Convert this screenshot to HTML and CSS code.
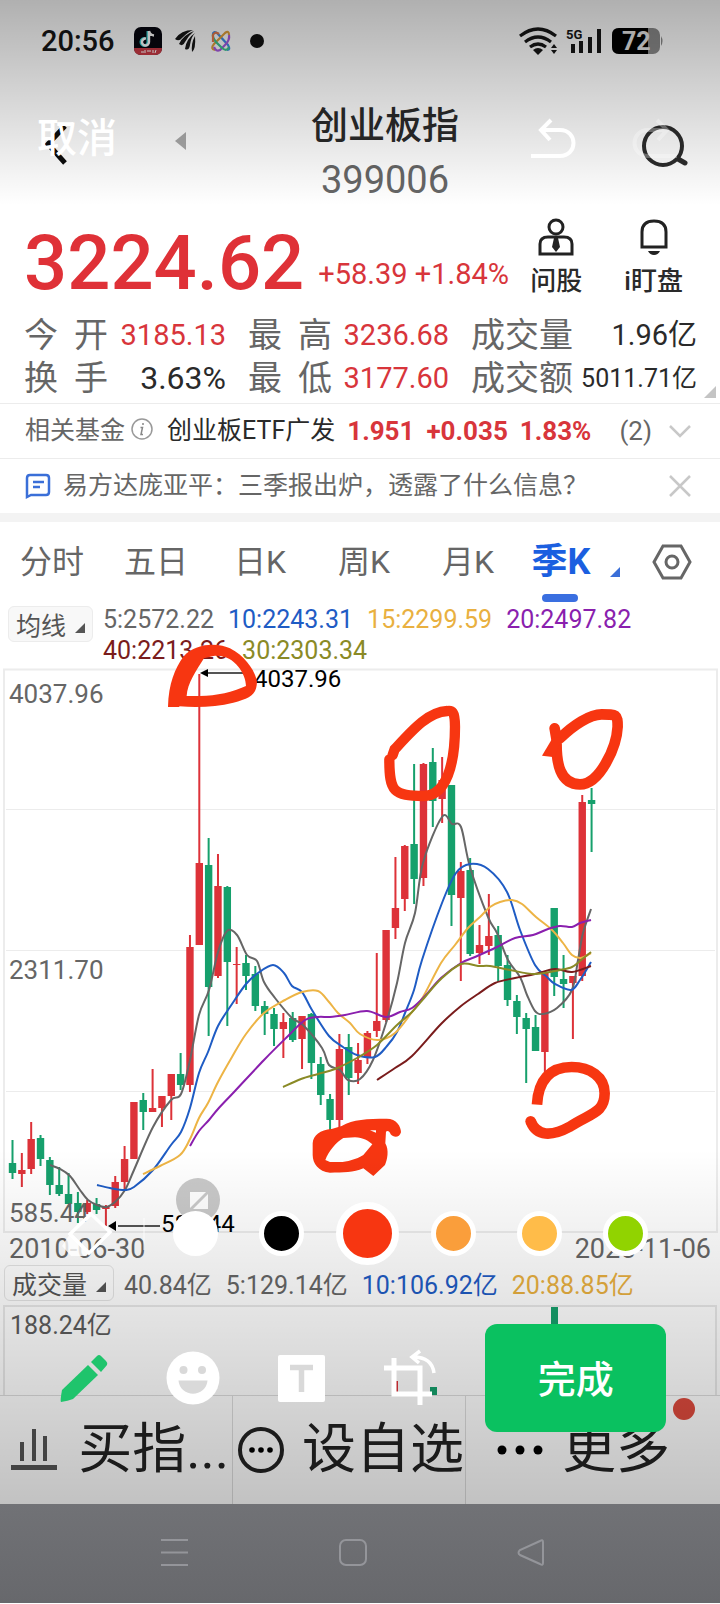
FILE: index.html
```html
<!DOCTYPE html>
<html lang="zh-CN">
<head>
<meta charset="utf-8">
<meta name="viewport" content="width=device-width">
<title>创业板指 399006</title>
<link rel="stylesheet" href="styles.css">
</head>
<body>
<div class="screen">
  <div class="status">
    <span class="clock">20:56</span>
    <svg class="app-icon" width="28" height="28" viewBox="0 0 28 28"><rect width="28" height="28" rx="7" fill="#06060f"/><path d="M0 21H28Q28 28 21 28H7Q0 28 0 21Z" fill="#c93a45"/><path d="M7 25h3M11 23v3M13 24h4M19 23v3M22 23l-1 3" stroke="#fff" stroke-width="1"/><path d="M14 4v11a3.500 3.500 0 1 1-3-3.500" fill="none" stroke="#35d6d6" stroke-width="3"/><path d="M15 4v11a3.500 3.500 0 1 1-3-3.500M15 4q1 4 5 4.500" fill="none" stroke="#fff" stroke-width="2.400"/></svg>
    <svg class="wing-icon" width="22" height="24" viewBox="0 0 22 24" fill="#161616"><path d="M19 1Q7 1 1 10Q5 13 8 9Q14 3 19 1Z"/><path d="M20 2Q9 6 5 15Q9 18 11 13Q15 6 20 2Z"/><path d="M21 4Q12 10 11 20Q15 22 16 16Q17 8 21 4Z"/><path d="M21 7Q17 14 18 23Q22 20 21 7Z"/></svg>
    <svg class="flower-icon" width="28" height="28" viewBox="0 0 28 28" fill="none" stroke-width="2.200"><rect width="28" height="28" rx="7" fill="#fff" opacity=".25"/><path d="M6 7Q6 4 10 6L21 18Q24 23 20 23" stroke="#3f8ee8"/><path d="M8 23Q3 22 7 17L18 6Q22 3 22 8" stroke="#e0a13c"/><path d="M22 8Q23 13 18 18L13 23Q9 25 7 20" stroke="#a65ae0"/><path d="M6 7Q5 10 9 15L15 21Q20 25 22 20" stroke="#3cc38f"/><path d="M6 15V8Q8 4 12 7" stroke="#e57a4a"/></svg>
    <span class="dot"></span>
    <svg class="signal" width="150" height="28" viewBox="0 0 150 28"><g fill="none" stroke="#161616" stroke-width="3.200"><path d="M2 9Q20-5 38 9"/><path d="M7 15Q20 5 33 15"/><path d="M12 20Q20 14 28 20"/></g><path d="M15 23Q20 19 25 23L20 28Z" fill="#161616"/><path d="M33 21l3-4 3 4zM33 23h6l-3 4z" fill="#161616"/><text x="48" y="12" class="net-label">5G</text><path d="M53 17h4v9h-4zM61 14h4v12h-4zM70 10h4v16h-4zM79 2h4v24h-4z" fill="#161616"/><rect x="94" y="1" width="48" height="26" rx="7" fill="#8a8a8a"/><path d="M101 1H130V27H101Q94 27 94 20V8Q94 1 101 1Z" fill="#000"/><path d="M143 9q3 5 0 10z" fill="#8a8a8a"/><text x="104" y="23" class="battery-label">72</text></svg>
  </div>

  <header class="header">
    <div class="header-left">
      <a href="#" aria-label="返回"><svg width="24" height="44" viewBox="0 0 24 44"><path d="M21 4L4 22L21 41" fill="none" stroke="#0c0c0c" stroke-width="5"/></svg></a>
      <a href="#" aria-label="上一个"><svg width="12" height="18" viewBox="0 0 12 18"><path d="M0 9L11 0V18Z" fill="#a9a9a9"/></svg></a>
    </div>
    <h1 class="title">创业板指<span class="code">399006</span></h1>
    <div class="header-right">
      <a href="#" aria-label="搜索"><svg width="48" height="44" viewBox="0 0 48 44" fill="none" stroke="#2c2c2c"><circle cx="22" cy="21" r="19" stroke-width="4"/><path d="M37 34L44 38" stroke-width="5" stroke-linecap="round"/></svg></a>
    </div>
  </header>

  <section class="quote">
    <span class="price">3224.62</span>
    <span class="change">+58.39 +1.84%</span>
    <a class="quick" href="#"><svg width="36" height="38" viewBox="0 0 36 38" fill="none" stroke="#222" stroke-width="3"><circle cx="18" cy="9" r="7"/><path d="M2 36V26Q2 19 10 19H26Q34 19 34 26V36Z"/><path d="M16 20h4l2 9-4 5-4-5z" fill="#222" stroke="none"/></svg>问股</a>
    <a class="quick" href="#"><svg width="30" height="38" viewBox="0 0 30 38" fill="none" stroke="#222" stroke-width="3"><path d="M3 29V14Q3 3 15 3T27 14V29Z"/><path d="M9 33H21Q19 37 15 37T9 33Z" fill="#222" stroke="none"/></svg>i盯盘</a>
  </section>

  <dl class="stats">
    <div><dt>今开</dt><dd class="up">3185.13</dd></div>
    <div><dt>最高</dt><dd class="up">3236.68</dd></div>
    <div><dt class="wide">成交量</dt><dd>1.96亿</dd></div>
    <div><dt>换手</dt><dd class="big">3.63%</dd></div>
    <div><dt>最低</dt><dd class="up">3177.60</dd></div>
    <div><dt class="wide">成交额</dt><dd class="small">5011.71亿</dd></div>
    <svg class="stats-more" width="12" height="12" viewBox="0 0 12 12"><path d="M12 0V12H0Z" fill="#c4c4c4"/></svg>
  </dl>

  <div class="strip fund">
    <span class="muted">相关基金</span>
    <svg class="info" width="22" height="22" viewBox="0 0 22 22"><circle cx="11" cy="11" r="10" fill="none" stroke="#999" stroke-width="1.500"/><path d="M12 5v2M9.500 9.500h2l-1.500 7h2" fill="none" stroke="#888" stroke-width="1.500"/></svg>
    <a class="fund-name" href="#">创业板ETF广发</a>
    <b class="up">1.951</b><b class="up">+0.035</b><b class="up">1.83%</b>
    <span class="count">(2)</span>
    <svg width="24" height="14" viewBox="0 0 24 14"><path d="M2 2L12 12L22 2" fill="none" stroke="#c8c8c8" stroke-width="2.500"/></svg>
  </div>
  <div class="strip news">
    <svg width="26" height="26" viewBox="0 0 26 26" fill="none" stroke="#3a6fd8" stroke-width="2.500"><path d="M2 24V5Q2 2 5 2H21Q24 2 24 5V19Q24 22 21 22H6Z"/><path d="M8 9H19M8 14H15"/></svg>
    <a class="muted news-link" href="#">易方达庞亚平：三季报出炉，透露了什么信息？</a>
    <button class="plain" aria-label="关闭"><svg width="24" height="24" viewBox="0 0 24 24"><path d="M2 2L22 22M22 2L2 22" stroke="#c8c8c8" stroke-width="2.500"/></svg></button>
  </div>

  <nav class="tabs">
    <button>分时</button><button>五日</button><button>日K</button><button>周K</button><button>月K</button>
    <button class="active">季K<svg class="tab-more" width="10" height="10" viewBox="0 0 10 10"><path d="M10 0V10H0Z" fill="#3a6fd8"/></svg></button>
    <button class="settings" aria-label="设置"><svg width="40" height="36" viewBox="0 0 40 36" fill="none" stroke="#666" stroke-width="3"><path d="M11 2H29L38 18L29 34H11L2 18Z"/><circle cx="20" cy="18" r="6"/></svg></button>
  </nav>

  <div class="legend">
    <button class="picker">均线<svg width="10" height="10" viewBox="0 0 10 10"><path d="M10 0V10H0Z" fill="#555"/></svg></button>
    <div class="values">
      <span class="c5">5:2572.22</span><span class="c10">10:2243.31</span><span class="c15">15:2299.59</span><span class="c20">20:2497.82</span><span class="c40">40:2213.26</span><span class="c30">30:2303.34</span>
    </div>
  </div>

  <svg class="chart" viewBox="0 668 720 566" role="img" aria-label="季K线图">
    <g fill="none" stroke="#ececec"><path d="M4 669.500H717V1232H4Z" stroke-width="2"/><path d="M6 809.500H715M6 950.500H715M6 1091.500H715"/></g>
    <g id="candles"></g>
    <g id="averages"></g>
    <circle cx="198" cy="1200" r="22" fill="#c9c9c9"/>
    <path d="M190 1192H206L190 1208ZM208 1194V1209H193Z" fill="#fff"/>
    <path d="M207 673H250M118 1226H160" stroke="#555" stroke-width="2"/>
    <path d="M200 673L208 669V677ZM108 1226L116 1221V1231Z"/>
    <g class="axis"><text x="9" y="703">4037.96</text><text x="9" y="979">2311.70</text><text x="9" y="1222">585.44</text></g>
    <g class="mark"><text x="254" y="687">4037.96</text><text x="161" y="1232">585.44</text></g>
  </svg>
  <div class="dates"><span>2010-06-30</span><span>2025-11-06</span></div>

  <div class="legend volume-legend">
    <button class="picker">成交量<svg width="10" height="10" viewBox="0 0 10 10"><path d="M10 0V10H0Z" fill="#555"/></svg></button>
    <div class="values">
      <span class="c5">40.84亿</span><span class="c5">5:129.14亿</span><span class="c10">10:106.92亿</span><span class="c15">20:88.85亿</span>
    </div>
  </div>
  <div class="volume">
    <span>188.24亿</span>
    <svg class="volume-bars" viewBox="0 0 720 88" aria-hidden="true"><path d="M551 0h7v88h-7zM430 80h7v8h-7z" fill="#16a06c"/><path d="M392 74h6v14h-6z" fill="#dd3239"/></svg>
  </div>

  <div class="actions">
    <a href="#"><svg width="46" height="44" viewBox="0 0 46 44" stroke="#555" stroke-width="5"><path d="M11 14V33M23 1V33M34 8V33" stroke-width="4"/><path d="M0 39.500H46"/></svg>买指...</a>
    <a href="#"><svg width="46" height="46" viewBox="0 0 46 46"><circle cx="23" cy="23" r="21" fill="none" stroke="#222" stroke-width="4"/><circle cx="14" cy="23" r="2.800"/><circle cx="23" cy="23" r="2.800"/><circle cx="32" cy="23" r="2.800"/></svg>设自选</a>
    <a href="#"><svg width="48" height="46" viewBox="0 0 48 46"><circle cx="6" cy="23" r="4.500"/><circle cx="24" cy="23" r="4.500"/><circle cx="42" cy="23" r="4.500"/></svg>更多<span class="badge"></span></a>
  </div>

  <svg class="doodle" viewBox="0 0 720 1604" aria-hidden="true">
    <g fill="#f73611" stroke="#f73611" stroke-width="0">
      <g transform="translate(0 640) scale(.3333)"><path fill-rule="evenodd" d="M504 201C506 130 525 85 550 50C590 5 660 10 690 25C740 50 768 100 771 125C770 165 750 175 700 188C650 200 600 203 538 199V201ZM560 168H600C650 168 700 155 738 138C738 100 700 40 640 48L612 55C590 90 562 130 560 168Z"/></g>
      <g transform="translate(360 660) scale(.3333)"><path d="M88 298C88 395 100 408 190 408C260 408 285 310 285 200C285 152 275 151 262 153C205 156 160 207 104 268L98 285" fill="none" stroke-width="31" stroke-linecap="round"/><path d="M584 205L590 240C588 310 600 373 660 373C720 373 770 260 773 200C773 163 770 163 725 163C690 163 640 195 600 235" fill="none" stroke-width="32" stroke-linecap="round"/><path d="M546 287L580 230L605 235L585 292Z"/></g>
      <g transform="translate(360 900) scale(.3333)"><path d="M531 614C535 540 570 501 635 501C690 501 734 530 734 580C734 640 690 640 630 680C575 710 530 710 512 664" fill="none" stroke-width="32"/><circle cx="512" cy="664" r="16"/></g>
      <g transform="translate(300 1100) scale(.3333)"><path fill-rule="evenodd" d="M38 130C40 105 60 90 95 87L125 78C160 58 200 56 260 56C290 56 303 80 303 97C298 115 280 113 272 103C268 92 262 92 258 95L256 130C268 150 262 180 255 195L220 228L190 205C160 218 130 218 90 218C55 215 38 190 38 165ZM76 180C85 155 110 125 130 114L165 112C190 113 205 122 217 133L190 165C170 178 140 186 120 186H90ZM210 91H228V98Z"/></g>
    </g>
  </svg>

  <div class="editor">
    <div class="editor-top">
      <button class="cancel">取消</button>
      <button class="plain" aria-label="撤销"><svg width="48" height="42" viewBox="0 0 48 42" fill="none" stroke="#fff" stroke-width="4"><path d="M22 2L12 12L21 22M12 12H31C49 12 49 38 31 38H2"/></svg></button>
      <button class="plain redo" aria-label="重做"><svg width="48" height="42" viewBox="0 0 48 42" fill="none" stroke="#fff" stroke-width="4"><path d="M26 2L36 12L27 22M36 12H17C-1 12-1 38 17 38H46"/></svg></button>
    </div>
    <div class="editor-bottom">
      <div class="colors">
        <button class="plain eraser" aria-label="橡皮擦"><svg width="54" height="46" viewBox="0 0 54 46"><path d="M32 3L51 21L30 42L11 23Z" fill="none" stroke="#fff" stroke-width="3.500"/><path d="M11 23L30 42L27 45H12L3 35Z" fill="#fff" opacity=".8"/></svg></button>
        <input class="white" type="radio" name="color" aria-label="白色">
        <input class="black" type="radio" name="color" aria-label="黑色">
        <input class="red" type="radio" name="color" aria-label="红色" checked>
        <input class="orange" type="radio" name="color" aria-label="橙色">
        <input class="yellow" type="radio" name="color" aria-label="黄色">
        <input class="green" type="radio" name="color" aria-label="绿色">
      </div>
      <div class="tools">
        <button class="plain" aria-label="画笔"><svg width="54" height="54" viewBox="0 0 54 54" fill="#1fc46c"><path d="M31 14L41 24L16 48Q11 50 4 51Q3 50 5 39Z"/><path d="M34 11L40 5Q42 3 44 5L49 10Q51 12 50 14L44 21Z"/></svg></button>
        <button class="plain" aria-label="表情"><svg width="54" height="54" viewBox="0 0 54 54"><circle cx="27" cy="27" r="26.500" fill="#fff"/><g fill="#d9d9d9"><circle cx="17.500" cy="19" r="4"/><circle cx="36" cy="19" r="4"/><path d="M12.500 29.500H41.500C40 47 14 47 12.500 29.500Z"/></g></svg></button>
        <button class="plain" aria-label="文字"><svg width="54" height="54" viewBox="0 0 54 54"><rect x="4" y="4" width="47" height="47" rx="2" fill="#fff"/><path d="M16 16.500H39M27.500 16V41" stroke="#d9d9d9" stroke-width="5.500" fill="none"/></svg></button>
        <button class="plain" aria-label="裁剪"><svg width="54" height="60" viewBox="0 0 54 60" fill="none" stroke="#fff" stroke-width="5"><path d="M12 10V46H50M2 20H38V57"/><path d="M38 3L30 9L37 15M31 9Q50 9 52 25" stroke-width="3.500"/></svg></button>
        <button class="done">完成</button>
      </div>
    </div>
  </div>

  <div class="system">
    <button class="plain" aria-label="最近任务"><svg width="30" height="30" viewBox="0 0 30 30" stroke="#94959a" stroke-width="2"><path d="M1 2H28M1 14.500H28M1 27H28"/></svg></button>
    <button class="plain" aria-label="主屏幕"><svg width="30" height="30" viewBox="0 0 30 30" fill="none" stroke="#94959a" stroke-width="2"><rect x="2" y="2" width="26" height="25" rx="6"/></svg></button>
    <button class="plain" aria-label="返回"><svg width="30" height="30" viewBox="0 0 30 30" fill="none" stroke="#94959a" stroke-width="2"><path d="M27 4V25Q27 28 24 26L4 17Q1 15 4 12L24 3Q27 1 27 4Z"/></svg></button>
  </div>
</div>
<script src="chart.js"></script>
</body>
</html>
```
FILE: styles.css
```css
* { box-sizing: border-box; }
body, h1, dl, dd { margin: 0; }
body {
  background: #fff;
  color: #2a2a2a;
  font-family: Roboto, "Noto Sans CJK SC", sans-serif;
}
svg { display: block; flex: none; }
a { color: inherit; text-decoration: none; }
button { border: 0; background: none; padding: 0; color: inherit; font: inherit; white-space: nowrap; }
.plain { display: flex; align-items: center; justify-content: center; }
.up { color: #d8353b; }
.muted { color: #666; }

.screen { position: relative; overflow: hidden; }

/* status bar */
.status { display: flex; align-items: center; padding: 26px 52px 20px 41px; line-height: 30px; }
.clock { font-size: 29px; font-weight: 500; color: #161616; }
.app-icon { margin-left: 19px; }
.wing-icon { margin-left: 12px; }
.flower-icon { margin-left: 11px; }
.dot { width: 14px; height: 14px; margin-left: 15px; border-radius: 50%; background: #111; }
.signal { margin-left: auto; }
.net-label { font-size: 13px; font-weight: 700; fill: #161616; }
.battery-label { font-size: 25px; font-weight: 700; fill: #e6e6e6; }

/* header */
.header { display: grid; grid-template-columns: 300fr 170fr 250fr; align-items: center; padding: 24px 0 0; }
.header-left { display: flex; align-items: center; gap: 107px; padding: 0 0 18px 44px; }
.header-left a:last-child { padding-bottom: 6px; }
.title { font-size: 37px; font-weight: 500; line-height: 54px; text-align: center; white-space: nowrap; }
.code { display: block; font-size: 38px; font-weight: 400; line-height: 52px; color: #666; }
.header-right { display: flex; justify-content: flex-end; padding: 0 31px 12px 0; }

/* quote */
.quote { display: flex; align-items: flex-end; padding: 12px 37px 9px 24px; }
.price { font-size: 76px; font-weight: 500; line-height: 82px; color: #df3137; margin-right: 14px; }
.change { font-size: 29px; line-height: 60px; color: #d8353b; white-space: nowrap; margin-right: auto; }
.quick { display: flex; flex-direction: column; align-items: center; gap: 6px; padding-bottom: 4px; font-size: 26px; font-weight: 500; line-height: 38px; white-space: nowrap; }
.quick:last-child { margin-left: 42px; }

.stats { position: relative; display: grid; grid-template-columns: 202fr 201fr 226fr; column-gap: 22px; padding: 1px 23px 3px 24px; }
.stats div { display: flex; justify-content: space-between; align-items: center; line-height: 43px; white-space: nowrap; }
.stats dt { width: 84px; font-size: 34px; color: #666; text-align-last: justify; }
.stats dt.wide { width: auto; }
.stats dd { font-size: 29px; }
.stats .big { font-size: 32px; }
.stats .small { font-size: 25px; }
.stats-more { position: absolute; right: 4px; bottom: 5px; }

/* strips */
.strip { display: flex; align-items: center; border-top: 1px solid #ececec; padding: 0 28px 0 25px; line-height: 54px; white-space: nowrap; }
.fund { font-size: 25px; }
.info { margin: 0 14px 4px 6px; }
.fund b { margin-left: 12px; font-size: 26px; }
.count { margin: 0 16px 0 auto; font-size: 26px; color: #666; }
.news { gap: 12px; font-size: 25px; border-bottom: 9px solid #f3f3f3; }
.news-link { flex: 1; min-width: 0; overflow: hidden; }

/* tabs */
.tabs { display: grid; grid-template-columns: repeat(5, 104fr) 82fr 118fr; padding: 12px 0; line-height: 56px; font-size: 32px; color: #666; }
.tabs .active { position: relative; color: #1b5fe0; font-size: 36px; font-weight: 700; }
.tabs .active::after { content: ""; position: absolute; left: 22px; bottom: -12px; width: 36px; height: 8px; border-radius: 4px; background: #3a6fe0; }
.tab-more { position: absolute; right: -18px; bottom: 13px; }
.settings { display: grid; place-items: center; padding-left: 22px; }

/* indicator legends */
.legend { display: flex; align-items: flex-start; gap: 10px; padding: 4px 8px 2px; }
.picker { display: flex; align-items: center; gap: 9px; height: 36px; padding: 0 7px; border: 1px solid #ececec; border-radius: 6px; background: #f8f8f8; color: #555; font-size: 25px; }
.picker svg { margin-top: 8px; }
.values { flex: 1; display: flex; flex-wrap: wrap; column-gap: 14px; font-size: 25px; line-height: 31px; }
.legend .values { margin-top: -2px; }
.c5 { color: #666; }
.c10 { color: #1f5cc4; }
.c15 { color: #e9b040; }
.c20 { color: #8a1fae; }
.c30 { color: #8a8a26; }
.c40 { color: #7a1c1c; }

/* charts */
.chart { width: 100%; height: auto; overflow: visible; }
.chart text { font-family: Roboto, sans-serif; }
.axis { font-size: 26px; fill: #666; }
.mark { font-size: 24px; fill: #000; }
.dates { display: flex; justify-content: space-between; padding: 0 9px; font-size: 27px; line-height: 31px; color: #666; }
.volume-legend { padding: 0 4px; }
.volume-legend .picker { background: none; border-color: #e4e4e4; }
.volume-legend .values { margin-top: 5px; }
.volume { position: relative; margin: 4px 3px 0; padding: 2px 5px 52px; border: 2px solid #e8e8e8; border-bottom: 0; font-size: 25px; line-height: 34px; color: #5c5c5c; }
.volume-bars { position: absolute; left: -5px; right: -5px; bottom: 0; width: calc(100% + 10px); height: 100%; }

/* bottom actions */
.actions { display: grid; grid-template-columns: 232fr 233fr 255fr; border-top: 1px solid #ddd; font-size: 54px; line-height: 108px; color: #222; white-space: nowrap; }
.actions a { position: relative; display: flex; align-items: center; justify-content: space-between; padding: 0 3px 0 11px; }
.actions a + a { border-left: 1px solid #ddd; padding: 0 1px 0 5px; }
.actions a:last-child { justify-content: flex-start; gap: 18px; padding-left: 30px; }
.badge { position: absolute; right: 25px; top: 2px; width: 22px; height: 22px; border-radius: 50%; background: #dd4a3d; }

.system { position: relative; display: grid; grid-template-columns: 264fr 178fr 178fr 100fr; padding: 34px 0 35px; background: linear-gradient(#717276, #67686c); }
.system button:first-child { padding-left: 86px; }

/* drawing overlay */
.doodle { position: absolute; left: 0; top: 0; width: 100%; height: auto; }
.editor {
  position: absolute;
  inset: 0;
  display: flex;
  flex-direction: column;
  justify-content: space-between;
  background:
    linear-gradient(rgba(0, 0, 0, .31), rgba(0, 0, 0, 0)) top / 100% 205px no-repeat,
    linear-gradient(rgba(0, 0, 0, 0), rgba(0, 0, 0, .24)) left bottom 99px / 100% 355px no-repeat;
}
.editor-top { display: flex; align-items: center; padding: 111px 41px 0 37px; color: #fff; }
.cancel { margin-right: auto; font-size: 40px; font-weight: 500; line-height: 56px; }
.redo { margin-left: 54px; opacity: .3; }
.editor-bottom { padding-bottom: 171px; }
.colors { display: grid; grid-template-columns: 152fr repeat(6, 86fr) 52fr; place-items: center; height: 63px; margin-bottom: 59px; }
.eraser { width: 100%; height: 32px; margin-right: 14px; border-right: 2px solid rgba(255, 255, 255, .4); padding-left: 36px; }
.colors input { appearance: none; width: 45px; height: 45px; margin: 0; border: 5px solid #fff; border-radius: 50%; }
.colors input:checked { width: 63px; height: 63px; border-width: 7px; }
.white { background: #fff; }
.black { background: #000; }
.red { background: #f73611; }
.orange { background: #fa9e3b; }
.yellow { background: #ffbc49; }
.green { background: #91d300; }
.tools { display: grid; grid-template-columns: repeat(4, 108fr) 202fr; align-items: center; padding: 0 54px 0 30px; }
.done { margin-left: 22px; padding-top: 4px; border-radius: 12px; background: #0ac160; color: #fff; font-size: 38px; font-weight: 500; line-height: 104px; }
```
FILE: chart.js
```js
const RED = "#dd3239";
const GREEN = "#16a06c";

// direction, high, body top, body bottom, low
const candles = [
  ["g",1140,1163,1173,1179],["r",1153,1170,1174,1187],["r",1122,1139,1169,1174],["g",1135,1138,1159,1166],
  ["g",1157,1160,1185,1195],["g",1167,1185,1194,1196],["g",1173,1194,1204,1204],["g",1192,1203,1212,1223],
  ["r",1200,1203,1212,1214],["g",1198,1204,1210,1214],["r",1205,1206,1209,1226],["r",1176,1182,1206,1208],
  ["r",1146,1159,1182,1190],["r",1102,1102,1159,1159],["g",1093,1100,1112,1130],["r",1069,1108,1112,1112],
  ["r",1096,1096,1108,1127],["r",1074,1074,1096,1120],["g",1053,1074,1085,1090],["r",935,947,1085,1092],
  ["r",674,863,945,945],["g",838,865,987,1036],["r",854,886,976,978],["g",886,887,962,1026],
  ["r",947,964,965,1004],["g",955,963,976,990],["g",966,974,1006,1011],["g",1001,1006,1014,1035],
  ["g",1008,1014,1029,1046],["r",1013,1022,1029,1058],["g",1012,1018,1040,1042],["r",1016,1016,1039,1069],
  ["g",1013,1014,1063,1079],["g",1057,1064,1095,1105],["g",1094,1099,1120,1130],["r",1034,1049,1120,1130],
  ["g",1034,1047,1078,1095],["r",1043,1060,1073,1084],["r",1031,1033,1057,1064],["r",953,1021,1031,1037],
  ["r",930,930,1020,1022],["r",857,908,928,939],["r",845,846,899,911],["g",764,844,879,904],
  ["r",763,764,878,886],["g",748,762,801,827],["r",757,780,799,823],["g",785,785,895,926],
  ["r",862,871,898,981],["g",858,870,954,956],["r",925,945,953,964],["r",894,936,946,955],
  ["g",926,935,966,982],["g",955,965,1000,1006],["g",995,1001,1017,1034],["g",1013,1018,1029,1083],
  ["g",1015,1027,1051,1051],["r",972,973,1052,1072],["g",908,908,977,996],["g",955,979,984,1008],
  ["r",976,976,983,1039],["r",795,802,976,981],["g",788,800,804,852]
];

const averages = {
  "#666666": [50,1165,60,1169,70,1176,80,1190,88,1200,97,1205,106,1207,115,1202,125,1190,134,1170,153,1127,171,1100,181,1094,190,1060,199,1015,209,990,218,952,227,931,237,935,247,955,257,961,264,982,275,998,292,1018,303,1025,322,1048,329,1065,340,1070,348,1080,360,1079,373,1060,387,1020,397,983,405,943,415,913,423,863,442,817,452,824,461,827,470,867,488,917,497,933,508,960,520,977,527,995,535,1011,543,1014,557,1008,572,990,578,960,583,933,591,909],
  "#1f5cc4": [97,1185,110,1188,125,1190,134,1187,153,1170,171,1145,181,1132,190,1108,199,1073,208,1052,218,1026,232,1004,246,984,258,973,273,965,284,973,292,986,302,992,312,1010,329,1036,343,1047,357,1055,375,1057,387,1046,397,1032,405,1013,414,990,422,960,442,903,456,873,470,864,488,869,507,892,520,930,535,965,547,977,555,984,571,990,580,980,591,962],
  "#edb445": [143,1174,160,1166,180,1155,190,1139,199,1118,208,1103,218,1082,232,1057,246,1034,264,1013,285,1000,302,992,318,991,329,1002,338,1013,350,1023,360,1034,378,1040,395,1033,412,1012,423,997,441,963,455,945,468,928,480,917,490,907,500,902,512,900,522,904,536,917,552,930,563,943,572,955,581,958,591,953],
  "#8a1fae": [190,1146,199,1131,209,1120,218,1109,235,1091,264,1060,286,1038,305,1020,318,1017,330,1017,345,1015,367,1011,386,1017,400,1012,412,1008,425,996,441,978,461,963,475,957,497,947,515,938,533,935,548,929,560,926,572,927,580,923,591,920],
  "#7a1c1c": [377,1080,395,1068,412,1056,441,1024,461,1006,478,994,495,983,515,978,535,974,555,969,572,972,591,966],
  "#8a8a26": [283,1087,301,1079,318,1074,335,1069,357,1058,377,1045,397,1025,412,1012,425,997,441,979,461,964,478,966,490,966,510,970,535,974,560,970,572,967,580,961,591,952]
};

function add(parent, name, attrs) {
  const el = document.createElementNS("http://www.w3.org/2000/svg", name);
  for (const key in attrs) el.setAttribute(key, attrs[key]);
  parent.appendChild(el);
}

const candleLayer = document.getElementById("candles");
candles.forEach(([dir, high, top, bottom, low], i) => {
  const x = 12.5 + i * 9.34;
  const fill = dir === "r" ? RED : GREEN;
  add(candleLayer, "rect", { x: x - 1, y: high, width: 2, height: low - high, fill });
  add(candleLayer, "rect", { x: x - 3.7, y: top, width: 7.4, height: bottom - top, fill });
});

// Catmull-Rom spline through the points of each moving average
function smooth(flat) {
  const p = [];
  for (let i = 0; i < flat.length; i += 2) p.push([flat[i], flat[i + 1]]);
  let d = `M${p[0]}`;
  for (let i = 0; i < p.length - 1; i++) {
    const a = p[i - 1] || p[i], b = p[i], c = p[i + 1], e = p[i + 2] || c;
    d += `C${b[0] + (c[0] - a[0]) / 6} ${b[1] + (c[1] - a[1]) / 6} ${c[0] - (e[0] - b[0]) / 6} ${c[1] - (e[1] - b[1]) / 6} ${c[0]} ${c[1]}`;
  }
  return d;
}

const averageLayer = document.getElementById("averages");
for (const color in averages) {
  add(averageLayer, "path", { d: smooth(averages[color]), fill: "none", stroke: color, "stroke-width": 2 });
}
```
